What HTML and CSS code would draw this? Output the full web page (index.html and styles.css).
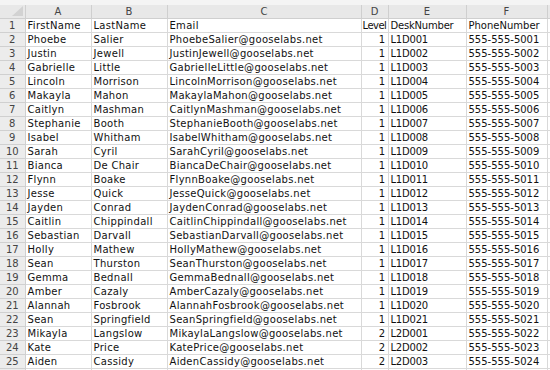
FILE: index.html
```html
<!DOCTYPE html>
<html>
<head>
<meta charset="utf-8">
<link rel="stylesheet" href="styles.css">
</head>
<body>
<div class="topstrip"></div>
<table class="sheet">
<colgroup>
<col class="c-rn"><col class="c-a"><col class="c-b"><col class="c-c"><col class="c-d"><col class="c-e"><col class="c-f"><col class="c-rest">
</colgroup>
<thead>
<tr class="hdr">
<th class="corner"><span class="tri"></span></th><th>A</th><th>B</th><th>C</th><th>D</th><th>E</th><th>F</th><th class="rest"></th>
</tr>
</thead>
<tbody>
<tr><td class="rn">1</td><td>FirstName</td><td>LastName</td><td>Email</td><td class="lvl">Level</td><td class="desk">DeskNumber</td><td class="ph">PhoneNumber</td><td class="rest"></td></tr>
<tr><td class="rn">2</td><td>Phoebe</td><td>Salier</td><td>PhoebeSalier@gooselabs.net</td><td class="num">1</td><td class="desk">L1D001</td><td class="ph">555-555-5001</td><td class="rest"></td></tr>
<tr><td class="rn">3</td><td>Justin</td><td>Jewell</td><td>JustinJewell@gooselabs.net</td><td class="num">1</td><td class="desk">L1D002</td><td class="ph">555-555-5002</td><td class="rest"></td></tr>
<tr><td class="rn">4</td><td>Gabrielle</td><td>Little</td><td>GabrielleLittle@gooselabs.net</td><td class="num">1</td><td class="desk">L1D003</td><td class="ph">555-555-5003</td><td class="rest"></td></tr>
<tr><td class="rn">5</td><td>Lincoln</td><td>Morrison</td><td>LincolnMorrison@gooselabs.net</td><td class="num">1</td><td class="desk">L1D004</td><td class="ph">555-555-5004</td><td class="rest"></td></tr>
<tr><td class="rn">6</td><td>Makayla</td><td>Mahon</td><td>MakaylaMahon@gooselabs.net</td><td class="num">1</td><td class="desk">L1D005</td><td class="ph">555-555-5005</td><td class="rest"></td></tr>
<tr><td class="rn">7</td><td>Caitlyn</td><td>Mashman</td><td>CaitlynMashman@gooselabs.net</td><td class="num">1</td><td class="desk">L1D006</td><td class="ph">555-555-5006</td><td class="rest"></td></tr>
<tr><td class="rn">8</td><td>Stephanie</td><td>Booth</td><td>StephanieBooth@gooselabs.net</td><td class="num">1</td><td class="desk">L1D007</td><td class="ph">555-555-5007</td><td class="rest"></td></tr>
<tr><td class="rn">9</td><td>Isabel</td><td>Whitham</td><td>IsabelWhitham@gooselabs.net</td><td class="num">1</td><td class="desk">L1D008</td><td class="ph">555-555-5008</td><td class="rest"></td></tr>
<tr><td class="rn">10</td><td>Sarah</td><td>Cyril</td><td>SarahCyril@gooselabs.net</td><td class="num">1</td><td class="desk">L1D009</td><td class="ph">555-555-5009</td><td class="rest"></td></tr>
<tr><td class="rn">11</td><td>Bianca</td><td>De Chair</td><td>BiancaDeChair@gooselabs.net</td><td class="num">1</td><td class="desk">L1D010</td><td class="ph">555-555-5010</td><td class="rest"></td></tr>
<tr><td class="rn">12</td><td>Flynn</td><td>Boake</td><td>FlynnBoake@gooselabs.net</td><td class="num">1</td><td class="desk">L1D011</td><td class="ph">555-555-5011</td><td class="rest"></td></tr>
<tr><td class="rn">13</td><td>Jesse</td><td>Quick</td><td>JesseQuick@gooselabs.net</td><td class="num">1</td><td class="desk">L1D012</td><td class="ph">555-555-5012</td><td class="rest"></td></tr>
<tr><td class="rn">14</td><td>Jayden</td><td>Conrad</td><td>JaydenConrad@gooselabs.net</td><td class="num">1</td><td class="desk">L1D013</td><td class="ph">555-555-5013</td><td class="rest"></td></tr>
<tr><td class="rn">15</td><td>Caitlin</td><td>Chippindall</td><td>CaitlinChippindall@gooselabs.net</td><td class="num">1</td><td class="desk">L1D014</td><td class="ph">555-555-5014</td><td class="rest"></td></tr>
<tr><td class="rn">16</td><td>Sebastian</td><td>Darvall</td><td>SebastianDarvall@gooselabs.net</td><td class="num">1</td><td class="desk">L1D015</td><td class="ph">555-555-5015</td><td class="rest"></td></tr>
<tr><td class="rn">17</td><td>Holly</td><td>Mathew</td><td>HollyMathew@gooselabs.net</td><td class="num">1</td><td class="desk">L1D016</td><td class="ph">555-555-5016</td><td class="rest"></td></tr>
<tr><td class="rn">18</td><td>Sean</td><td>Thurston</td><td>SeanThurston@gooselabs.net</td><td class="num">1</td><td class="desk">L1D017</td><td class="ph">555-555-5017</td><td class="rest"></td></tr>
<tr><td class="rn">19</td><td>Gemma</td><td>Bednall</td><td>GemmaBednall@gooselabs.net</td><td class="num">1</td><td class="desk">L1D018</td><td class="ph">555-555-5018</td><td class="rest"></td></tr>
<tr><td class="rn">20</td><td>Amber</td><td>Cazaly</td><td>AmberCazaly@gooselabs.net</td><td class="num">1</td><td class="desk">L1D019</td><td class="ph">555-555-5019</td><td class="rest"></td></tr>
<tr><td class="rn">21</td><td>Alannah</td><td>Fosbrook</td><td>AlannahFosbrook@gooselabs.net</td><td class="num">1</td><td class="desk">L1D020</td><td class="ph">555-555-5020</td><td class="rest"></td></tr>
<tr><td class="rn">22</td><td>Sean</td><td>Springfield</td><td>SeanSpringfield@gooselabs.net</td><td class="num">1</td><td class="desk">L1D021</td><td class="ph">555-555-5021</td><td class="rest"></td></tr>
<tr><td class="rn">23</td><td>Mikayla</td><td>Langslow</td><td>MikaylaLangslow@gooselabs.net</td><td class="num">2</td><td class="desk">L2D001</td><td class="ph">555-555-5022</td><td class="rest"></td></tr>
<tr><td class="rn">24</td><td>Kate</td><td>Price</td><td>KatePrice@gooselabs.net</td><td class="num">2</td><td class="desk">L2D002</td><td class="ph">555-555-5023</td><td class="rest"></td></tr>
<tr><td class="rn">25</td><td>Aiden</td><td>Cassidy</td><td>AidenCassidy@gooselabs.net</td><td class="num">2</td><td class="desk">L2D003</td><td class="ph">555-555-5024</td><td class="rest"></td></tr>
<tr class="partial"><td class="rn"></td><td></td><td></td><td></td><td></td><td></td><td></td><td class="rest"></td></tr>
</tbody>
</table>
</body>
</html>
```
FILE: styles.css
```css
html, body {
  margin: 0;
  padding: 0;
  background: #ffffff;
  overflow: hidden;
}
body {
  width: 550px;
  height: 370px;
  font-family: "DejaVu Sans", sans-serif;
  font-size: 10px;
  color: #111111;
}
.topstrip {
  height: 5px;
  background: #f4f4f4;
}
.sheet {
  border-collapse: collapse;
  table-layout: fixed;
  width: 550px;
}
.c-rn { width: 25px; }
.c-a { width: 66px; }
.c-b { width: 76px; }
.c-c { width: 194px; }
.c-d { width: 27px; }
.c-e { width: 78px; }
.c-f { width: 81px; }
.c-rest { width: 3px; }
.sheet th, .sheet td {
  height: 13px;
  padding: 0 2px;
  border: 1px solid #d9d9d9;
  white-space: nowrap;
  overflow: hidden;
  line-height: 13px;
  text-align: left;
  font-weight: normal;
}
.sheet td {
  letter-spacing: 0.3px;
}
.sheet td:first-child, .sheet th:first-child { border-left: none; }
.hdr th {
  background: #e8e8e8;
  text-align: center;
  color: #444;
  border-color: #cfcfcf;
  border-top: none;
}
.corner {
  position: relative;
}
.tri {
  position: absolute;
  right: 2px;
  bottom: 2px;
  width: 0;
  height: 0;
  border-left: 11px solid transparent;
  border-bottom: 10px solid #d2d2d2;
}
.sheet td.rn {
  background: #ececec;
  color: #444;
  text-align: center;
  border-color: #d0d0d0;
  padding: 0;
  letter-spacing: 0;
}
.sheet td.num {
  text-align: right;
}
.sheet td.lvl {
  padding: 0 0 0 1px;
  letter-spacing: -0.5px;
}
.sheet td.desk {
  letter-spacing: -0.2px;
}
.sheet td.ph {
  letter-spacing: 0;
}
.sheet .rest {
  padding: 0;
  border-right: none;
}
.partial td {
  height: 5px;
}
```
